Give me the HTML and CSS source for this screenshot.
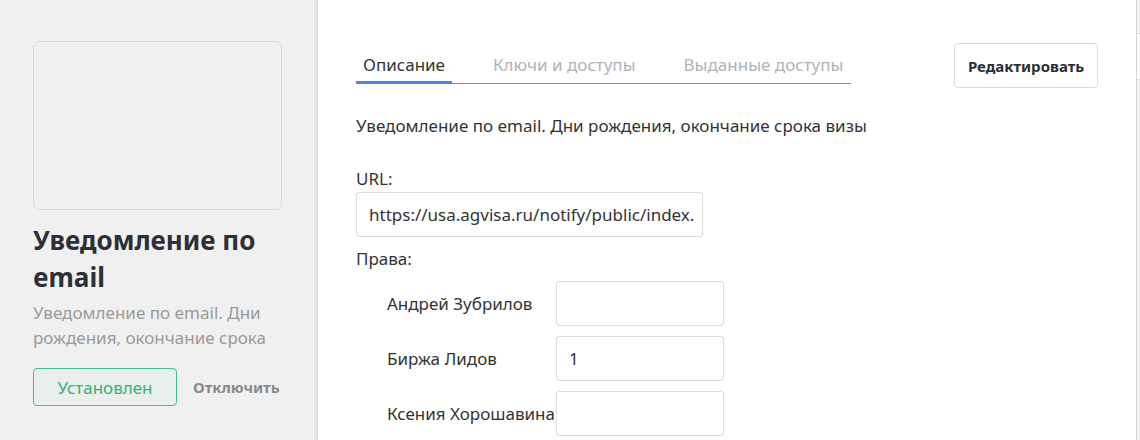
FILE: index.html
```html
<!DOCTYPE html>
<html lang="ru">
<head>
<meta charset="utf-8">
<link rel="stylesheet" href="styles.css">
</head>
<body>
<div class="page">
  <aside class="side">
    <div class="cover"></div>
    <h1 class="app-title">Уведомление по email</h1>
    <p class="app-desc">Уведомление по email. Дни рождения, окончание срока</p>
    <div class="side-actions">
      <button class="btn-installed">Установлен</button>
      <button class="btn-off">Отключить</button>
    </div>
  </aside>
  <main class="main">
    <div class="top">
      <nav class="tabs">
        <span class="tab active">Описание</span>
        <span class="tab">Ключи и доступы</span>
        <span class="tab">Выданные доступы</span>
      </nav>
      <button class="btn-edit">Редактировать</button>
    </div>
    <p class="desc">Уведомление по email. Дни рождения, окончание срока визы</p>
    <div class="label">URL:</div>
    <div class="field url">https://usa.agvisa.ru/notify/public/index.</div>
    <div class="label">Права:</div>
    <div class="rights">
      <div class="right-row"><span class="rname">Андрей Зубрилов</span><div class="field small"></div></div>
      <div class="right-row"><span class="rname">Биржа Лидов</span><div class="field small">1</div></div>
      <div class="right-row"><span class="rname">Ксения Хорошавина</span><div class="field small"></div></div>
    </div>
  </main>
  <div class="edge">
    <div class="edge-row"></div>
  </div>
</div>
</body>
</html>
```
FILE: styles.css
```css
* { box-sizing: border-box; }
html, body { margin: 0; padding: 0; }
body {
  font-family: "Noto Sans", "Open Sans", sans-serif;
  color: #333;
  background: #fff;
  width: 1140px;
  height: 440px;
  overflow: hidden;
}
.page { display: flex; height: 440px; }
.side {
  width: 318px;
  flex: none;
  background: #f0f0f0;
  border-right: 1px solid #d8d8d8;
  box-shadow: inset -3px 0 2px -1px #e0e0e0;
  padding: 41px 0 0 33px;
}
.cover {
  width: 249px;
  height: 169px;
  border: 1px solid #d9d9d9;
  border-radius: 6px;
}
.app-title {
  margin: 12px 0 0;
  font-size: 26px;
  line-height: 37px;
  font-weight: 700;
  color: #2c3036;
  width: 250px;
}
.app-desc {
  margin: 4px 0 0;
  font-size: 17px;
  line-height: 25px;
  color: #9a9a9a;
  width: 250px;
  height: 50px;
  overflow: hidden;
}
.side-actions { display: flex; align-items: center; margin-top: 18px; }
.btn-installed {
  width: 144px;
  height: 38px;
  border: 1px solid #43bf8c;
  border-radius: 4px;
  background: #e9efec;
  color: #3aae7d;
  font: inherit;
  font-size: 17px;
  padding: 0;
}
.btn-off {
  border: 0;
  background: none;
  font: inherit;
  font-weight: 700;
  font-size: 15px;
  color: #8a8a8a;
  margin-left: 16px;
  padding: 0;
}
.main { flex: 1; padding: 43px 0 0 38px; }
.top { display: flex; justify-content: space-between; align-items: flex-start; width: 742px; }
.tabs {
  display: flex;
  width: 495px;
  margin-top: 6px;
  border-bottom: 1px solid #6f93c6;
  gap: 34px;
}
.tab {
  padding: 0 7px;
  font-size: 17px;
  line-height: 32px;
  color: #b0b3b8;
  margin-bottom: -1px;
  border-bottom: 3px solid transparent;
}
.tab.active { color: #333; border-bottom-color: #4f87d6; }
.btn-edit {
  width: 144px;
  height: 45px;
  border: 1px solid #dadada;
  border-radius: 4px;
  background: #fff;
  font: inherit;
  font-weight: 700;
  font-size: 15px;
  color: #2c3036;
  padding: 0;
}
.desc { margin: 26px 0 0; font-size: 17px; line-height: 24px; }
.label { font-size: 17px; line-height: 24px; margin-top: 29px; }
.label + .field { margin-top: 1px; }
.field {
  height: 45px;
  border: 1px solid #dcdcdc;
  border-radius: 3px;
  font-size: 17px;
  line-height: 43px;
  padding: 0 12px;
  white-space: nowrap;
  overflow: hidden;
}
.url { width: 347px; margin-bottom: 10px; }
.url + .label { margin-top: 0; }
.rights { padding-left: 31px; margin-top: 10px; display: flex; flex-direction: column; gap: 10px; }
.right-row { display: flex; align-items: center; }
.rname { width: 169px; font-size: 17px; }
.field.small { width: 168px; }
.edge {
  width: 4px;
  flex: none;
  border-left: 1px solid #d4d4d4;
  background: #f4f4f4;
  overflow: hidden;
}
.edge-row {
  margin-top: 33px;
  height: 47px;
  border-top: 1px solid #e0e0e0;
  border-bottom: 1px solid #e0e0e0;
  background: #fff;
}
```
